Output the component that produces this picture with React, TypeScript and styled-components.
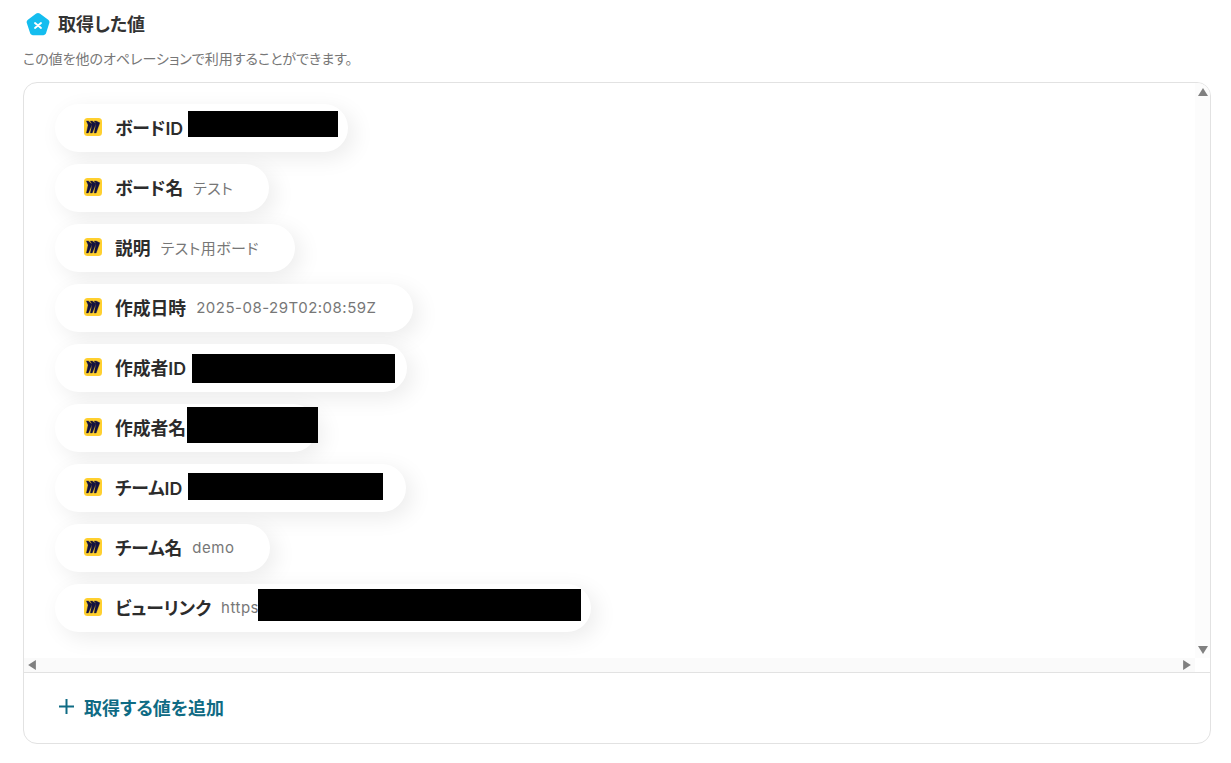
import React from "react";
import styled, { createGlobalStyle } from "styled-components";

const GlobalStyle = createGlobalStyle`
  html, body {
    margin: 0;
    padding: 0;
    background: #fff;
    font-family: Inter, "Noto Sans CJK JP", "Noto Sans", sans-serif;
    font-feature-settings: "palt";
  }
`;

const Page = styled.div`
  box-sizing: border-box;
  width: 1231px;
  height: 763px;
  padding: 12px 20px 19px 23px;
  display: flex;
  flex-direction: column;
  overflow: hidden;
`;

const Heading = styled.div`
  display: flex;
  align-items: center;
  gap: 7px;
  height: 26px;
  padding-left: 2px;
`;

const HeadingText = styled.h2`
  margin: 0;
  font-size: 18px;
  font-weight: 600;
  line-height: 24px;
  color: #333;
`;

const Caption = styled.p`
  margin: 11px 0 13px;
  font-size: 14px;
  line-height: 20px;
  color: #777;
`;

const Card = styled.section`
  flex: 1;
  min-height: 0;
  border: 1px solid #e2e2e2;
  border-radius: 14px;
  display: flex;
  flex-direction: column;
  overflow: hidden;
`;

const ScrollFrame = styled.div`
  height: 589px;
  display: grid;
  grid-template-columns: 1fr 15px;
  grid-template-rows: 1fr 14px;
`;

const ChipList = styled.ul`
  list-style: none;
  margin: 0;
  padding: 21px 0 0 31px;
  display: flex;
  flex-direction: column;
  align-items: flex-start;
  gap: 12px;
`;

const Chip = styled.li`
  position: relative;
  box-sizing: border-box;
  height: 48px;
  padding: 0 36px 2px 29px;
  display: flex;
  align-items: center;
  background: #fff;
  border-radius: 24px;
  box-shadow: 6px 6px 22px rgba(0, 0, 0, 0.08);
`;

const Label = styled.span`
  margin-left: 13px;
  font-size: 17.8px;
  font-weight: 600;
  color: #2c2c2c;
  white-space: nowrap;
`;

const Value = styled.span<{ $width?: number }>`
  margin-left: 10px;
  font-size: 15px;
  color: #777;
  letter-spacing: 0.5px;
  white-space: nowrap;
  overflow: hidden;
  ${p => (p.$width ? `width: ${p.$width}px;` : "")}
`;

const Redaction = styled.span<{ $left: number; $top: number; $width: number; $height: number }>`
  position: absolute;
  left: ${p => p.$left}px;
  top: ${p => p.$top}px;
  width: ${p => p.$width}px;
  height: ${p => p.$height}px;
  background: #000;
`;

const VerticalTrack = styled.div`
  background: #fcfcfc;
  display: flex;
  flex-direction: column;
  justify-content: space-between;
  align-items: center;
  padding: 4px 0 3px;
`;

const HorizontalTrack = styled.div`
  background: #fafafa;
  display: flex;
  justify-content: space-between;
  align-items: center;
  padding: 0 3px 0 3px;
`;

const Corner = styled.div`
  background: #fff;
`;

const Arrow = styled.svg`
  display: block;
  width: 10px;
  height: 10px;
  fill: #808080;
`;

const Footer = styled.div`
  flex: 1;
  border-top: 1px solid #e2e2e2;
  display: flex;
  align-items: center;
  padding: 0 0 1px 34px;
`;

const AddButton = styled.button`
  border: 0;
  background: none;
  padding: 0 0 2px;
  display: flex;
  align-items: center;
  gap: 9px;
  font: inherit;
  font-size: 18px;
  font-weight: 600;
  color: #0f6b84;
`;

const MiroIcon = () => (
  <svg width="18" height="18" viewBox="0 0 18 18">
    <rect width="18" height="18" rx="3.5" fill="#ffd02f" />
    <path
      transform="translate(2.4 3) scale(0.56 0.5)"
      d="M17.392 0H13.9L17 4.808 10.444 0H6.949l3.102 6.3L3.494 0H0l3.05 8.131L0 24h3.494L10.05 6.985 6.949 24h3.494L17 5.494 13.899 24h3.493L24 3.672 17.392 0z"
      fill="#14123f"
      stroke="#14123f"
      strokeWidth="0.6"
    />
  </svg>
);

const PentagonIcon = () => (
  <svg width="26" height="26" viewBox="0 0 26 26">
    <path
      d="M11.2 1.5c1.1-.8 2.5-.8 3.6 0l8.4 6.2c1.1.8 1.5 2.1 1.1 3.4l-3.2 10c-.4 1.3-1.6 2.1-2.9 2.1H8c-1.3 0-2.5-.8-2.9-2.1l-3.3-10c-.4-1.3 0-2.6 1.1-3.4z"
      fill="#14bdef"
    />
    <path d="M10 11 16 16M16 11 10 16" stroke="#fff" strokeWidth="1.9" strokeLinecap="round" />
  </svg>
);

const PlusIcon = () => (
  <svg width="17" height="17" viewBox="0 0 17 17">
    <path d="M8.5 1v15M1 8.5h15" stroke="#0f6b84" strokeWidth="2" />
  </svg>
);

type Mask = { left: number; top: number; width: number; height: number };
type Row = { label: string; value: string; valueWidth?: number; mask?: Mask };

const rows: Row[] = [
  { label: "ボードID", value: "", valueWidth: 119, mask: { left: 133, top: 7, width: 150, height: 26 } },
  { label: "ボード名", value: "テスト" },
  { label: "説明", value: "テスト用ボード" },
  { label: "作成日時", value: "2025-08-29T02:08:59Z" },
  { label: "作成者ID", value: "", valueWidth: 175, mask: { left: 137, top: 10, width: 203, height: 29 } },
  { label: "作成者名", value: "", valueWidth: 85, mask: { left: 132, top: 3, width: 131, height: 36 } },
  { label: "チームID", value: "", valueWidth: 178, mask: { left: 133, top: 9, width: 195, height: 27 } },
  { label: "チーム名", value: "demo" },
  { label: "ビューリンク", value: "https://miro.com/app/board/", valueWidth: 334, mask: { left: 203, top: 5, width: 323, height: 32 } },
];

export default function App() {
  return (
    <>
      <GlobalStyle />
      <Page>
        <Heading>
          <PentagonIcon />
          <HeadingText>取得した値</HeadingText>
        </Heading>
        <Caption>この値を他のオペレーションで利用することができます。</Caption>
        <Card>
          <ScrollFrame>
            <ChipList>
              {rows.map(row => (
                <Chip key={row.label}>
                  <MiroIcon />
                  <Label>{row.label}</Label>
                  <Value $width={row.valueWidth}>{row.value}</Value>
                  {row.mask && (
                    <Redaction
                      $left={row.mask.left}
                      $top={row.mask.top}
                      $width={row.mask.width}
                      $height={row.mask.height}
                    />
                  )}
                </Chip>
              ))}
            </ChipList>
            <VerticalTrack>
              <Arrow viewBox="0 0 9 9"><path d="M4.5 1 9 8H0z" /></Arrow>
              <Arrow viewBox="0 0 9 9"><path d="M0 1h9L4.5 8z" /></Arrow>
            </VerticalTrack>
            <HorizontalTrack>
              <Arrow viewBox="0 0 9 9"><path d="M1 4.5 8 0v9z" /></Arrow>
              <Arrow viewBox="0 0 9 9"><path d="M1 0l7 4.5L1 9z" /></Arrow>
            </HorizontalTrack>
            <Corner />
          </ScrollFrame>
          <Footer>
            <AddButton>
              <PlusIcon />
              取得する値を追加
            </AddButton>
          </Footer>
        </Card>
      </Page>
    </>
  );
}
